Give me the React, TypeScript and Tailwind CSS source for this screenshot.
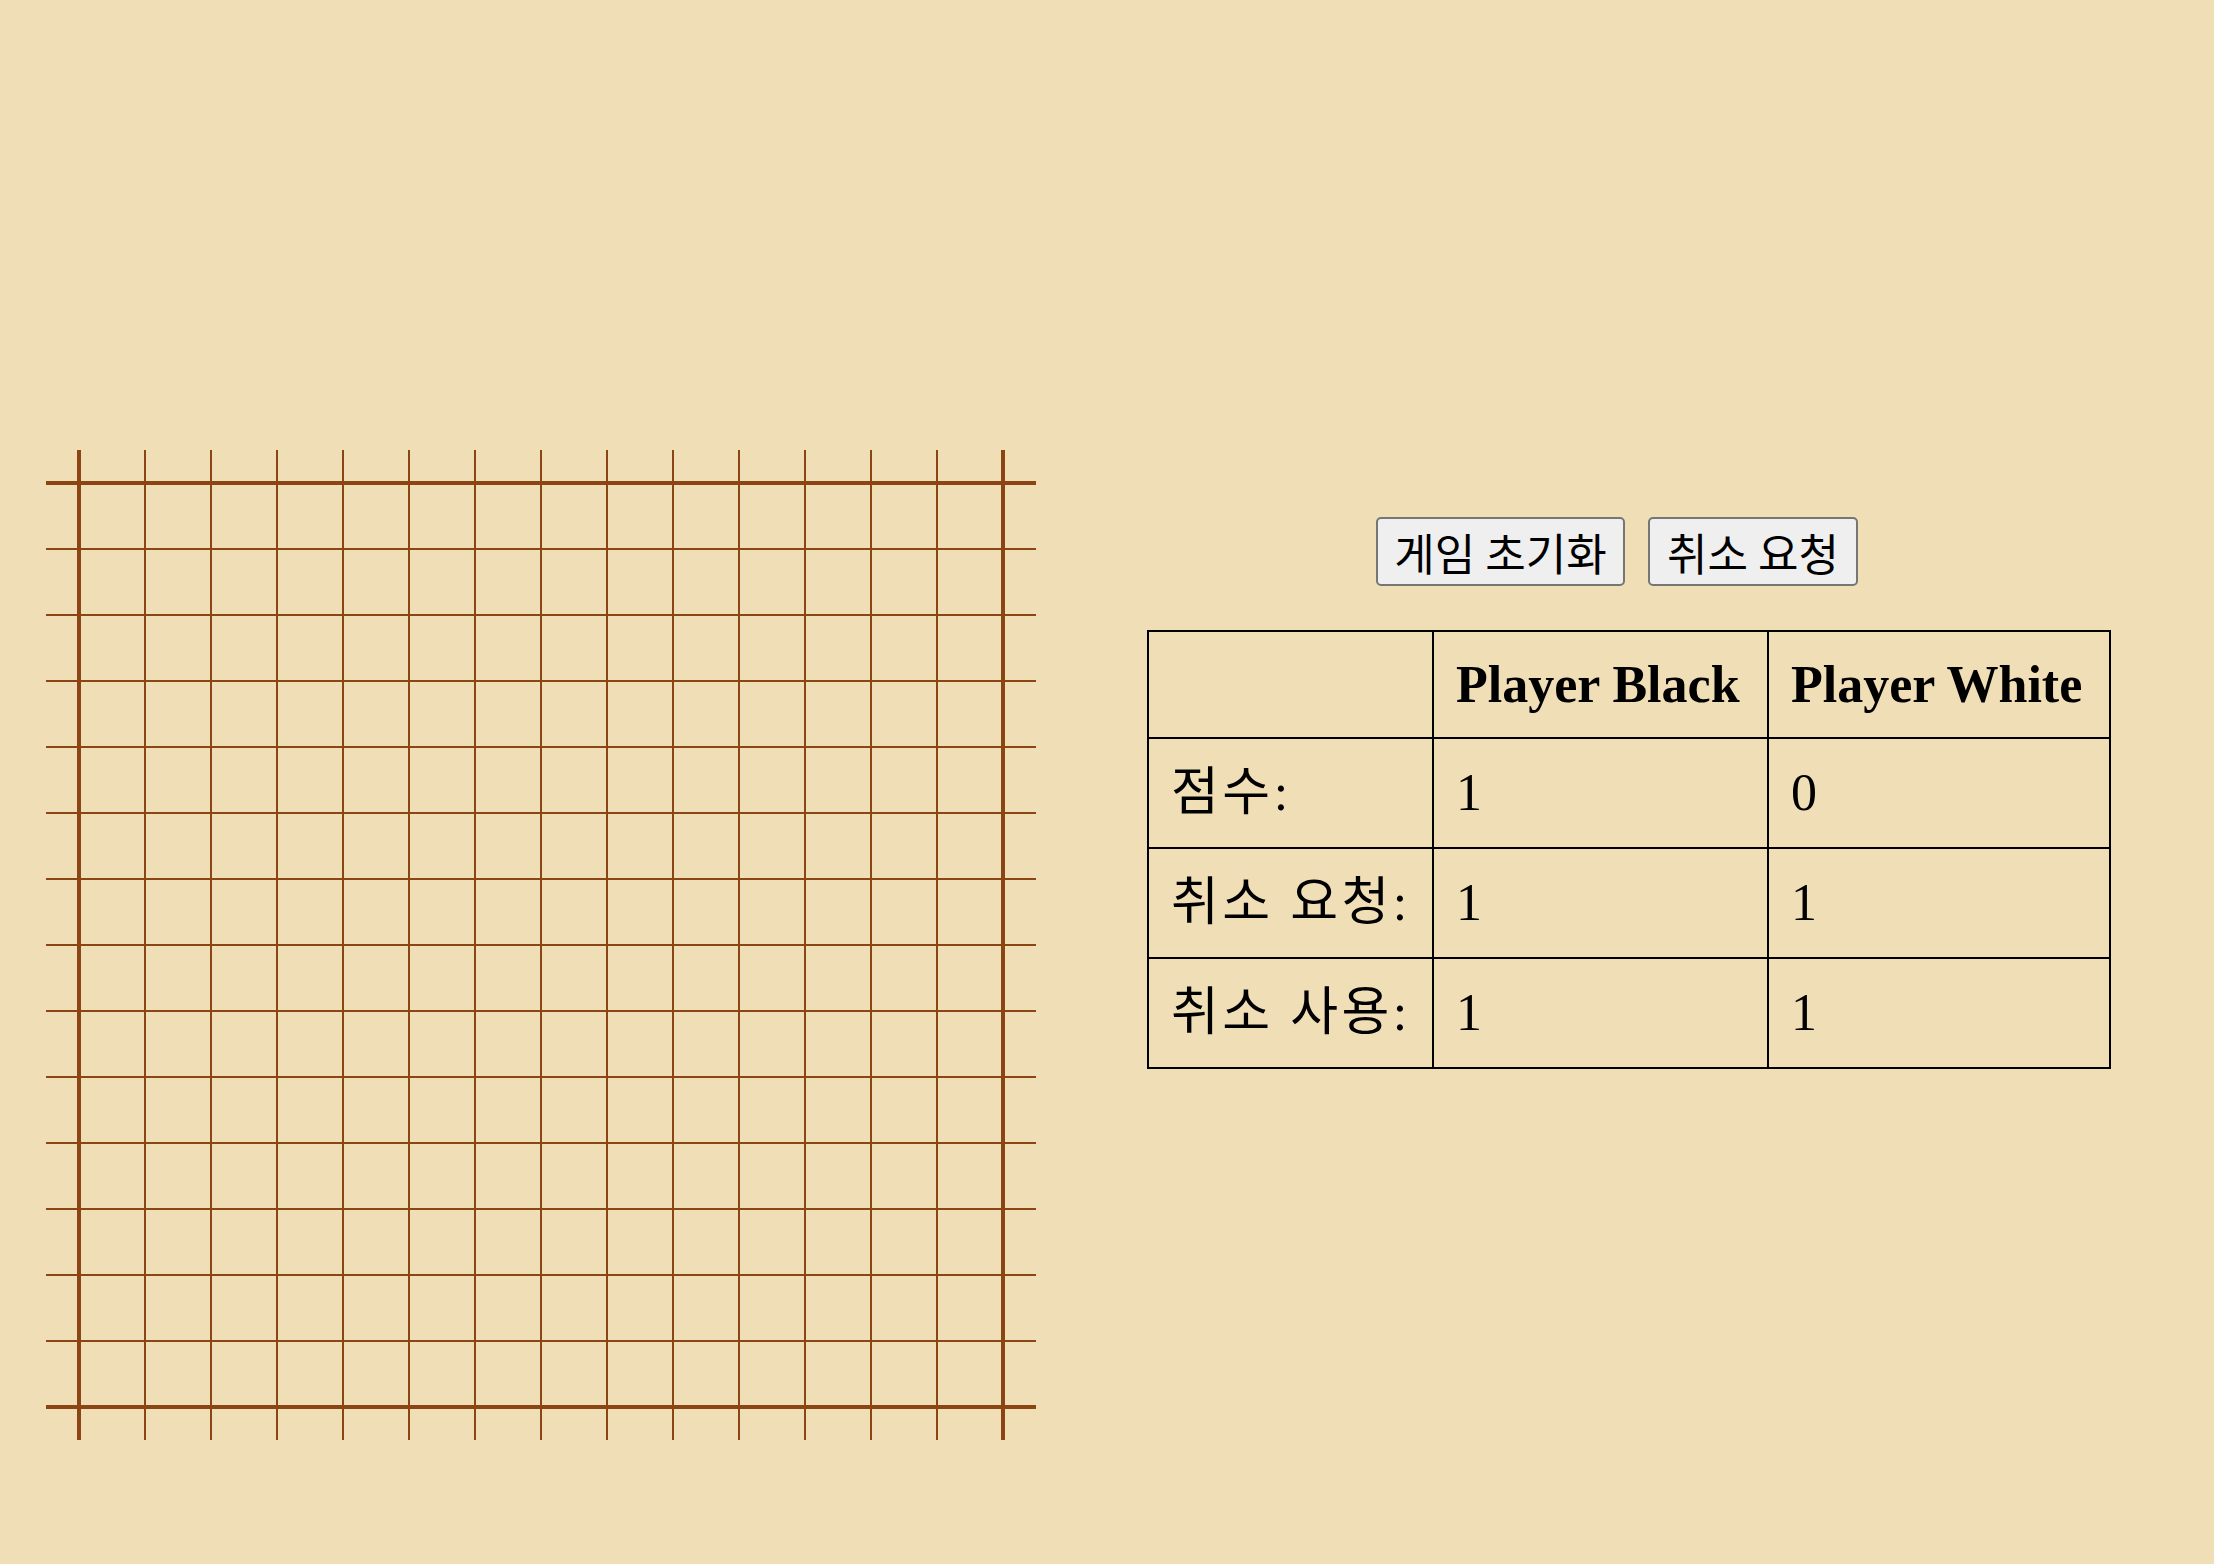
import React from "react";

const SIZE = 15;

const Cell: React.FC<{ row: number; col: number }> = ({ row, col }) => {
  const edgeRow = row === 0 || row === SIZE - 1;
  const edgeCol = col === 0 || col === SIZE - 1;
  return (
    <div className="relative w-[66px] h-[66px]">
      {/* horizontal line */}
      <span
        className={`absolute left-0 right-0 bg-[#8b4513] ${edgeRow ? "top-[31px] h-[4px]" : "top-[32px] h-[2px]"}`}
      />
      {/* vertical line */}
      <span
        className={`absolute top-0 bottom-0 bg-[#8b4513] ${edgeCol ? "left-[31px] w-[4px]" : "left-[32px] w-[2px]"}`}
      />
    </div>
  );
};

const Board: React.FC = () => (
  <div className="grid grid-cols-[repeat(15,66px)] shrink-0">
    {Array.from({ length: SIZE * SIZE }).map((_, i) => (
      <Cell key={i} row={Math.floor(i / SIZE)} col={i % SIZE} />
    ))}
  </div>
);

const rows = [
  { label: "점수:", black: 1, white: 0 },
  { label: "취소 요청:", black: 1, white: 1 },
  { label: "취소 사용:", black: 1, white: 1 },
];

export default function App() {
  return (
    <div className="min-h-screen w-full bg-[#f0deb6] text-black font-['Liberation_Serif','Noto_Sans_CJK_KR',serif]">
      <div className="flex items-start pt-[450px] pl-[46px]">
        <Board />

        <div className="ml-[111px] mt-[67px] flex flex-col">
          {/* Controls */}
          <div className="flex gap-[23px] pl-[229px]">
            <button className="w-[249px] h-[69px] flex items-center justify-center bg-[#efefef] border-2 border-[#767676] rounded-[5px] text-[44px] leading-none font-['Noto_Sans_CJK_KR',sans-serif]">
              게임 초기화
            </button>
            <button className="w-[210px] h-[69px] flex items-center justify-center bg-[#efefef] border-2 border-[#767676] rounded-[5px] text-[44px] leading-none font-['Noto_Sans_CJK_KR',sans-serif]">
              취소 요청
            </button>
          </div>

          {/* Score table */}
          <table className="mt-[44px] w-[962px] table-fixed border-collapse border-2 border-black text-[52px] leading-[60px]">
            <colgroup>
              <col className="w-[285px]" />
              <col className="w-[335px]" />
              <col className="w-[342px]" />
            </colgroup>
            <thead>
              <tr>
                <th className="h-[107px] border-2 border-black" />
                <th className="h-[107px] border-2 border-black pl-[22px] text-left font-bold whitespace-nowrap">
                  Player Black
                </th>
                <th className="h-[107px] border-2 border-black pl-[22px] text-left font-bold whitespace-nowrap">
                  Player White
                </th>
              </tr>
            </thead>
            <tbody>
              {rows.map((r) => (
                <tr key={r.label}>
                  <td className="h-[110px] border-2 border-black pl-[22px] whitespace-nowrap tracking-[3.5px]">{r.label}</td>
                  <td className="h-[110px] border-2 border-black pl-[22px]">{r.black}</td>
                  <td className="h-[110px] border-2 border-black pl-[22px]">{r.white}</td>
                </tr>
              ))}
            </tbody>
          </table>
        </div>
      </div>
    </div>
  );
}
